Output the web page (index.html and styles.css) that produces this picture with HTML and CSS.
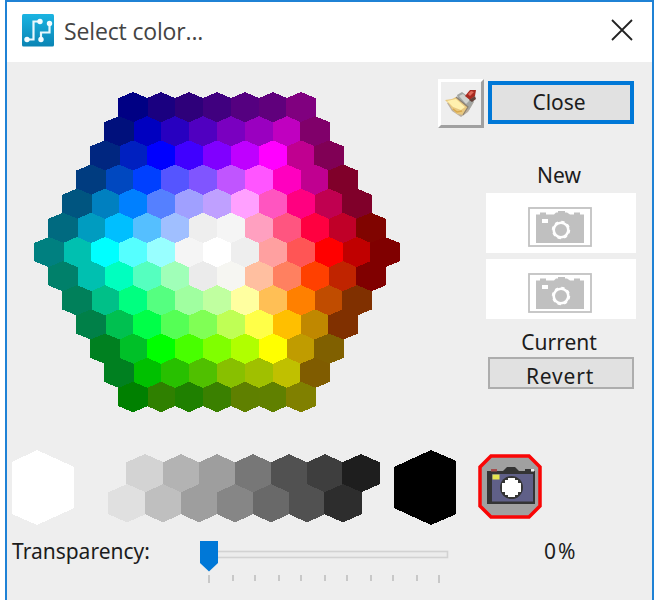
FILE: index.html
```html
<!DOCTYPE html>
<html lang="en">
<head>
<meta charset="utf-8">
<title>Select color...</title>
<link rel="stylesheet" href="styles.css">
</head>
<body>
<div class="window">
  <header class="titlebar">
    <svg class="app-icon" width="32" height="33" viewBox="0 0 32 33">
      <defs><linearGradient id="app" x1="0" y1="0" x2="0" y2="1"><stop offset="0" stop-color="#1bb4e2"/><stop offset="1" stop-color="#0a84b4"/></linearGradient></defs>
      <rect width="32" height="32.500" rx="1.500" fill="url(#app)"/>
      <path d="M5 25.500H11.500V7.500H18M19 25.500V18.500H27.500V9" fill="none" stroke="#e8f8fd" stroke-width="2.200"/>
      <g fill="#f4fcff"><circle cx="5" cy="25.500" r="2.700"/><circle cx="18" cy="7.500" r="2.700"/><circle cx="19" cy="25.500" r="2.700"/><circle cx="27.500" cy="9.500" r="2.700"/></g>
    </svg>
    <h1 class="title">Select color...</h1>
    <svg class="close-x" width="22" height="22" viewBox="0 0 22 22"><path d="M1 1L21 21M21 1L1 21" stroke="#222" stroke-width="1.800" fill="none"/></svg>
  </header>

  <main class="main">
    <svg id="wheel" class="wheel" width="368" height="322" viewBox="33 91 368 322" shape-rendering="crispEdges"></svg>
    <aside class="side">
      <div class="actions">
        <button class="pick" aria-label="Pick">
          <svg width="36" height="34" viewBox="0 0 36 34">
            <path d="M4 16L9 24L18 30L25 25L31 15L27 13Z" fill="#b9aea0"/>
            <path d="M14 8L19 5L31 14L26 23L16 16Z" fill="#a2a5a2"/>
            <path d="M16 9L20 7L27 13L23 17Z" fill="#d0d2ce"/>
            <path d="M2 13L9 12L13 10L25 20L20 28L14 27L9 22L6 17Z" fill="#e8c880"/>
            <path d="M4 14L13 12L22 20L18 23L10 20Z" fill="#fff0ae"/>
            <path d="M10 22L14 25L19 24" fill="none" stroke="#d8a84c" stroke-width="1.500"/>
            <path d="M13 10L25 20L20 28" fill="none" stroke="#8c8070" stroke-width="1.200"/>
            <path d="M22 9L27 3L33 3L32 9L27 13Z" fill="#a82a20"/>
            <path d="M25 7L28 4L31 5L27 9Z" fill="#e06a5a"/>
            <path d="M26 13L32 9L33 12L29 15Z" fill="#63423a"/>
          </svg>
        </button>
        <button class="btn btn-close"><span class="t-close">Close</span></button>
      </div>
      <div class="label label-new">New</div>
      <div class="swatch"><svg class="cam" width="64" height="40" viewBox="0 0 64 40"><use href="#camera"/></svg></div>
      <div class="swatch"><svg class="cam" width="64" height="40" viewBox="0 0 64 40"><use href="#camera"/></svg></div>
      <div class="label label-current">Current</div>
      <button class="btn btn-revert"><span class="t-revert">Revert</span></button>
    </aside>
  </main>

  <section class="tones">
    <svg id="greys" width="448" height="78" viewBox="10 448 448 78" shape-rendering="crispEdges"></svg>
    <svg class="nocolor" width="66" height="66" viewBox="0 0 66 66">
      <path d="M14 2H52L63 13V52L52 63H14L3 52V13Z" fill="#a0a0a0" stroke="#f90505" stroke-width="3.500"/>
      <path d="M10 20V17H26L30 13H38L42 17H58V50H10Z" fill="#343434"/>
      <rect x="14" y="15" width="6" height="2.500" fill="#a54b4b"/>
      <rect x="48" y="15" width="6" height="2.500" fill="#343434"/><rect x="54" y="15" width="3" height="2.500" fill="#eee"/>
      <rect x="15" y="20" width="41" height="27.500" fill="#606088"/>
      <rect x="15.500" y="20.500" width="7" height="5" fill="#e6e650"/>
      <circle cx="34.500" cy="33.500" r="11.500" fill="#343434"/>
      <path d="M31 24H38V26H41V29H44V38H41V41H38V43H31V41H28V38H25V29H28V26H31Z" fill="#fff"/>
    </svg>
  </section>

  <footer class="alpha">
    <label class="alpha-label">Transparency:</label>
    <svg class="slider" width="252" height="46" viewBox="198 539 252 46">
      <rect x="201.500" y="551.500" width="246" height="6" fill="#ececec" stroke="#d2d2d2" stroke-width="1.600"/>
      <path d="M200 541H218V563L209 571.500L200 563Z" fill="#0078d7"/>
      <path d="M209 575V583M439 575V583M233 575V581M255 575V581M279 575V581M301 575V581M325 575V581M347 575V581M371 575V581M393 575V581M417 575V581" stroke="#c4c4c4" stroke-width="1.800"/>
    </svg>
    <output class="alpha-value">0%</output>
  </footer>
</div>

<svg class="defs" width="0" height="0">
  <symbol id="camera" viewBox="0 0 64 40">
    <rect x="1" y="1" width="62" height="38" fill="#fff" stroke="#c2c2c2" stroke-width="1.800"/>
    <path d="M8 7.500H12V5.500H18V7.500H26L28 5.500H30V4H37V5.500H39L42 7.500H46V5.500H52V7.500H56V36H8Z" fill="#c0c0c0"/>
    <rect x="14" y="12" width="6" height="4" fill="#fff"/>
    <circle cx="33" cy="23" r="7.300" fill="none" stroke="#fff" stroke-width="2.600"/>
    <circle cx="33" cy="23" r="8.400" fill="none" stroke="#fff" stroke-width="1.600" stroke-dasharray="3.300 3.300"/>
  </symbol>
</svg>
<script src="palette.js"></script>
</body>
</html>
```
FILE: styles.css
```css
* { box-sizing: border-box; }
body {
  margin: 0;
  background: #fff;
  color: #1c1c1c;
  font: 21px "Noto Sans", "Open Sans", sans-serif;
  overflow: hidden;
}
svg { display: block; flex: none; }
.defs { position: absolute; }
button { padding: 0; font: inherit; color: inherit; }
.window {
  width: 649px;
  height: 600px;
  margin-left: 5px;
  border: 2px solid #1f82d5;
  border-bottom: 0;
  background: #eee;
}
.titlebar {
  display: flex;
  align-items: flex-start;
  height: 60px;
  padding: 12px 19px 0 15px;
  background: #fff;
}
.title {
  flex: 1;
  margin: 0 0 0 10px;
  font: 400 23px/34px "Open Sans", "Noto Sans", sans-serif;
  letter-spacing: -0.15px;
  color: #444;
}
.close-x { margin-top: 5px; }
.main {
  display: flex;
  justify-content: space-between;
  height: 386px;
  padding: 17px 16px 0 26px;
}
.wheel { margin-top: 12px; }
.side { width: 198px; }
.actions { display: flex; align-items: flex-start; gap: 5px; }
.pick {
  display: grid;
  place-items: center;
  width: 46px;
  height: 49px;
  background: #eee;
  border: 3px solid;
  border-color: #fff #a0a0a0 #a0a0a0 #fff;
}
.btn {
  display: grid;
  place-items: center;
  width: 146px;
  background: #e1e1e1;
  border: 2px solid #adadad;
  line-height: 26px;
}
.btn-close { height: 43px; margin: 2px -1px 0 -1px; padding: 0 4px 1px 0; border: 4px solid #0078d7; }
.btn-revert { height: 32px; margin-left: 50px; padding: 4px 2px 0 0; letter-spacing: 0.8px; }
.t-close { letter-spacing: -0.1px; }
.label {
  width: 150px;
  margin-left: 46px;
  line-height: 28px;
  text-align: center;
}
.label-new { margin-top: 33px; margin-bottom: 4px; }
.label-current { height: 32px; padding-top: 3px; }
.swatch {
  width: 150px;
  height: 60px;
  margin: 0 0 6px 48px;
  padding: 14px 0 0 42px;
  background: #fff;
}
.tones {
  display: flex;
  align-items: center;
  gap: 19px;
  height: 78px;
  padding-left: 3px;
}
.alpha {
  display: flex;
  height: 74px;
  padding: 13px 0 0 5px;
}
.alpha-label { width: 186px; margin-top: -1px; line-height: 26px; }
.alpha-value { margin: -1px 0 0 94px; line-height: 26px; letter-spacing: 2px; }
```
FILE: palette.js
```js
const NS = "http://www.w3.org/2000/svg";

// Colour rows from top to bottom of the wheel.
const rows = [
  "000084 1a0080 2e007a 40007f 550080 60007c 80007f",
  "00107c 0000c0 2800c0 5000c0 7a00c0 9a00c0 c000c0 80006a",
  "002680 0020c0 0000ff 4000ff 8000ff bf00ff ff00ff c00090 800055",
  "003c80 0048c0 0040ff 5555ff 8055ff c055ff ff55ff ff00bf c00090 80002a",
  "005580 0080c0 0080ff 5580ff a0a0ff bfa0ff ffa0ff ff55c0 ff0080 c00050 80002a",
  "006a80 009cc0 00bfff 55bfff a0bfff eeeeee f5f5f5 ffa0c0 ff5580 ff0040 c00028 800400",
  "008080 00c0b0 00ffff 55ffff 98ffff f5f5f5 ffffff eeeeee ffa0a0 ff5555 ff0000 c00000 800000",
  "00806a 00c0b0 00ffbf 55ffbf a0ffb8 ebebeb f6f6f2 ffbfa0 ff8060 ff4000 c02400 800000",
  "00805a 00c088 00ff80 55ff80 a0ffa0 c0ffa0 ffffa0 ffbf55 ff8000 c04c00 803000",
  "008048 00c050 00ff48 55ff55 80ff55 bfff55 ffff48 ffbf00 c08800 803000",
  "008020 00c028 00ff00 48ff00 80ff00 b0ff00 ffff00 c09c00 806000",
  "008020 00c000 28c000 50c000 88c000 a0c000 c0c000 805c00",
  "008000 2f8000 1f8000 3a8000 5f8000 608000 808000"
];

function polygon(svg, points, fill) {
  const p = document.createElementNS(NS, "polygon");
  p.setAttribute("points", points.map(pt => pt.join(",")).join(" "));
  p.setAttribute("fill", fill);
  svg.appendChild(p);
}

function hex(svg, cx, top, half, shoulder, height, fill) {
  polygon(svg, [
    [cx, top], [cx + half, top + shoulder], [cx + half, top + height - shoulder],
    [cx, top + height], [cx - half, top + height - shoulder], [cx - half, top + shoulder]
  ], fill);
}

const wheel = document.getElementById("wheel");
rows.forEach((row, r) => {
  const cells = row.split(" ").map((color, i, all) => ({
    color,
    cx: 217 + 28 * (i - (all.length - 1) / 2),
    outer: i === 0 || i === all.length - 1
  }));
  // Edge cells are slightly wider and lie over their neighbours.
  cells.sort((a, b) => a.outer - b.outer);
  cells.forEach(c => hex(wheel, c.cx, 92 + 24.15 * r, c.outer ? 15 : 14.1, 6.2, 30.4, "#" + c.color));
});

const greys = document.getElementById("greys");
["d3d3d3", "b3b3b3", "9e9e9e", "777777", "515151", "3e3e3e", "1e1e1e"].forEach((c, i) =>
  hex(greys, 145 + 36 * i, 454, i === 0 || i === 6 ? 19 : 18.1, 8.5, 38.5, "#" + c));
["e0e0e0", "bfbfbf", "9e9e9e", "868686", "696969", "515151", "2d2d2d"].forEach((c, i) =>
  hex(greys, 127 + 36 * i, 484, i === 0 || i === 6 ? 19 : 18.1, 8.5, 38.5, "#" + c));
polygon(greys, [[37, 450], [74.3, 467], [74.3, 508], [37, 525], [12, 514], [12, 462]], "#ffffff");
polygon(greys, [[431, 450], [456.3, 461], [456.3, 514], [431, 525], [394, 508], [394, 467]], "#000000");
```
